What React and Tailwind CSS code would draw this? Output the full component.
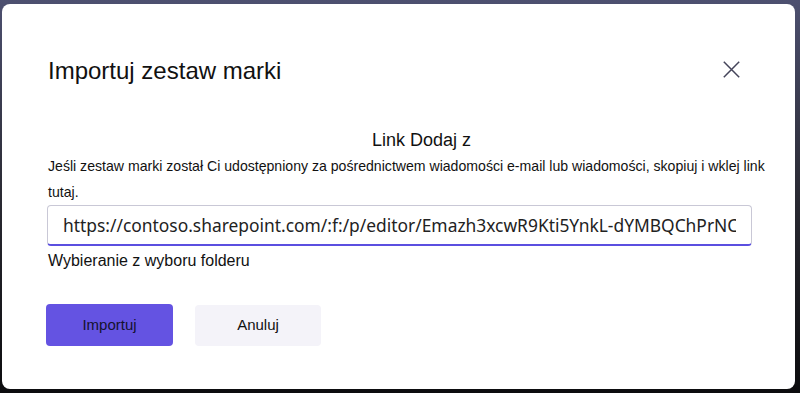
export default function App() {
    const shareLink =
        "https://contoso.sharepoint.com/:f:/p/editor/Emazh3xcwR9Kti5YnkL-dYMBQChPrNCxyzAbc123";

    return (
        <div className="w-[800px] h-[393px] pl-[2px] pr-[5px] pt-[4px] pb-[4px] bg-linear-to-b from-[#4d5070] via-[#2a2a33] to-[#0c0c0e] font-['Liberation_Sans',Arial,sans-serif] text-[#111]">
            <div className="h-full bg-white rounded-[8px] pl-[46px] pt-[51px]">
                {/* Header */}
                <div className="flex items-start justify-between pr-[55px]">
                    <h2 className="text-[24px] leading-[32px]">Importuj zestaw marki</h2>
                    <button className="mt-[6px] text-[#44445a]">
                        <svg width="17" height="17" viewBox="0 0 17 17" fill="none" stroke="currentColor" strokeWidth="1.5">
                            <path d="M0.8 0.8 L16.2 16.2 M16.2 0.8 L0.8 16.2" />
                        </svg>
                    </button>
                </div>

                {/* Body */}
                <div className="mt-[41px] text-center text-[18px] leading-[24px]">Link Dodaj z</div>
                <p className="mt-[1px] w-[730px] text-[14.1px] leading-[26px]">
                    Jeśli zestaw marki został Ci udostępniony za pośrednictwem wiadomości e-mail lub
                    wiadomości, skopiuj i wklej link tutaj.
                </p>
                <input
                    readOnly
                    value={shareLink}
                    className="block -ml-[1px] w-[705px] h-[41px] px-[15px] rounded-[4px] border border-[#c9c8d6] border-b-2 border-b-[#5b4fe0] font-['Noto_Sans',sans-serif] text-[17.4px] text-[#222] outline-none"
                />
                <div className="mt-[5px] text-[16px] leading-[20px]">Wybieranie z wyboru folderu</div>

                {/* Footer */}
                <div className="mt-[33px] flex gap-[22px] -ml-[2px]">
                    <button className="w-[127px] h-[42px] rounded-[4px] bg-[#6453e2] text-[15px] text-[#15122e]">
                        Importuj
                    </button>
                    <button className="w-[126px] h-[41px] mt-[1px] rounded-[4px] bg-[#f4f3f9] text-[15px] text-[#111]">
                        Anuluj
                    </button>
                </div>
            </div>
        </div>
    );
}
